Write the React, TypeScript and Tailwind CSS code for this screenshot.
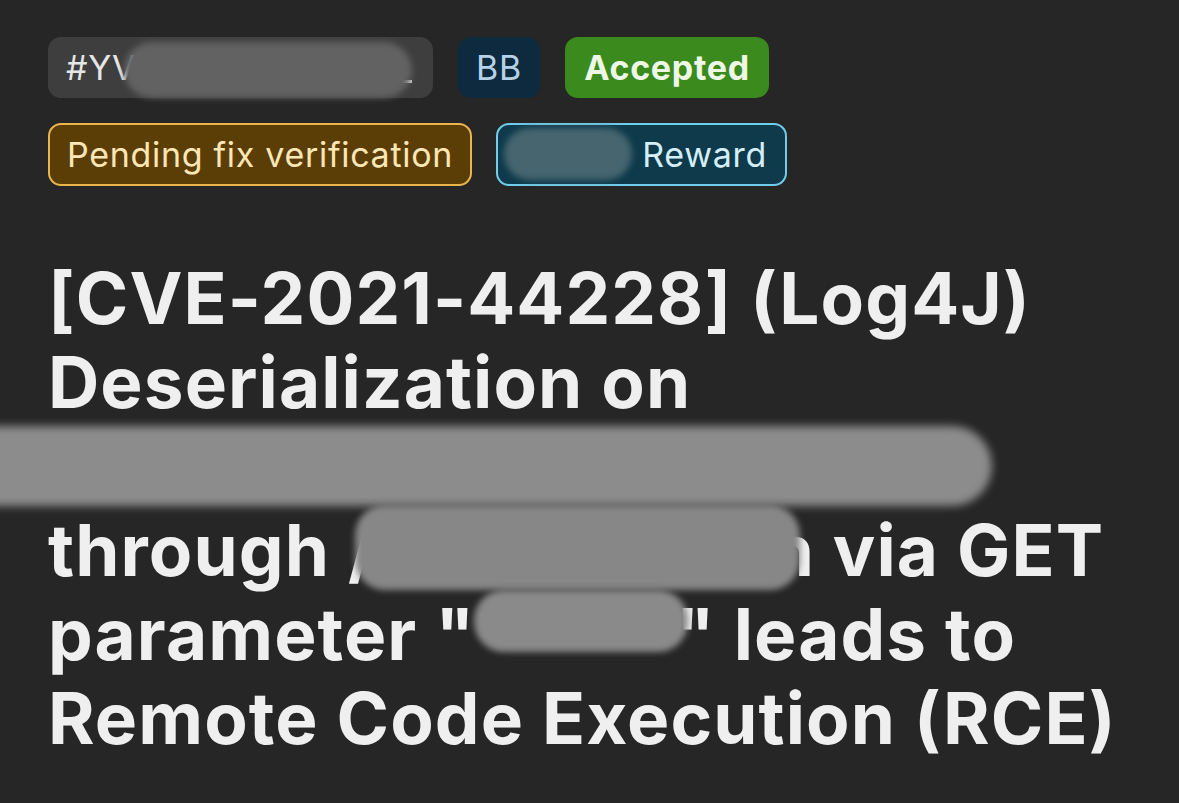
import React from "react";

export default function App() {
  return (
    <div
      className="w-[1179px] h-[803px] bg-[#262626] overflow-hidden relative"
      style={{ fontFamily: "Inter, 'Noto Sans', sans-serif" }}
    >
      <div className="pl-[48px] pt-[37px] flex flex-col gap-[25px]">
        <div className="flex gap-[25px] items-center">
          <div className="relative h-[61px] w-[385px] rounded-[13px] bg-[#3e3e3e] flex items-center pl-[18px] text-[34px] tracking-[0.7px] text-[#e6e6e6]">
            <span>#YV</span>
            <span className="absolute left-[354px] top-[43px] h-[3px] w-[10px] bg-[#d8d8d8]" />
            <span className="absolute left-[76px] top-[5px] h-[56px] w-[288px] rounded-full bg-[#626262] blur-[3px]" />
          </div>
          <div className="h-[61px] w-[82px] rounded-[13px] bg-[#0d2a3e] flex items-center justify-center text-[34px] tracking-[0.7px] text-[#b7d2e8]">
            BB
          </div>
          <div className="h-[61px] w-[204px] rounded-[13px] bg-[#3a8a1d] flex items-center justify-center text-[34px] tracking-[0.7px] font-bold text-[#eef7e6]">
            Accepted
          </div>
        </div>
        <div className="flex gap-[24px] items-center">
          <div className="h-[63px] w-[424px] rounded-[13px] border-[2px] border-[#eab54d] bg-[#5b3d06] flex items-center justify-center text-[34px] tracking-[0.7px] text-[#fbe6b6]">
            Pending fix verification
          </div>
          <div className="relative h-[63px] w-[291px] rounded-[13px] border-[2px] border-[#72cdea] bg-[#0e3a4b] flex items-center justify-end pr-[18px] text-[34px] tracking-[0.7px] text-[#d4eef7]">
            Reward
            <span className="absolute left-[6px] top-[3px] h-[52px] w-[128px] rounded-full bg-[#46656f] blur-[3px]" />
          </div>
        </div>
      </div>
      <div className="pl-[48px] mt-[70px] text-[71px] leading-[84px] font-bold text-[#efefef] tracking-[1.1px]">
        <div className="whitespace-nowrap">[CVE-2021-44228] (Log4J)</div>
        <div className="whitespace-nowrap">Deserialization on</div>
        <div className="h-[84px] relative -ml-[48px]">
          <span className="absolute left-[-14px] top-[2px] h-[80px] w-[1006px] rounded-r-full bg-[#8c8c8c] blur-[4px]" />
        </div>
        <div className="whitespace-nowrap">
          through /
          <span className="relative inline-block w-[393px] h-[10px]">
            <span className="absolute left-[-22px] bottom-[-14px] h-[85px] w-[445px] rounded-[30px] bg-[#878787] blur-[3px]" />
          </span>
          n via GET
        </div>
        <div className="whitespace-nowrap">
          parameter "
          <span className="relative inline-block w-[200px] h-[10px]">
            <span className="absolute left-[-2px] bottom-[8px] h-[62px] w-[214px] rounded-[30px] bg-[#8a8a8a] blur-[3px]" />
          </span>
          " leads to
        </div>
        <div className="whitespace-nowrap">Remote Code Execution (RCE)</div>
      </div>
    </div>
  );
}
